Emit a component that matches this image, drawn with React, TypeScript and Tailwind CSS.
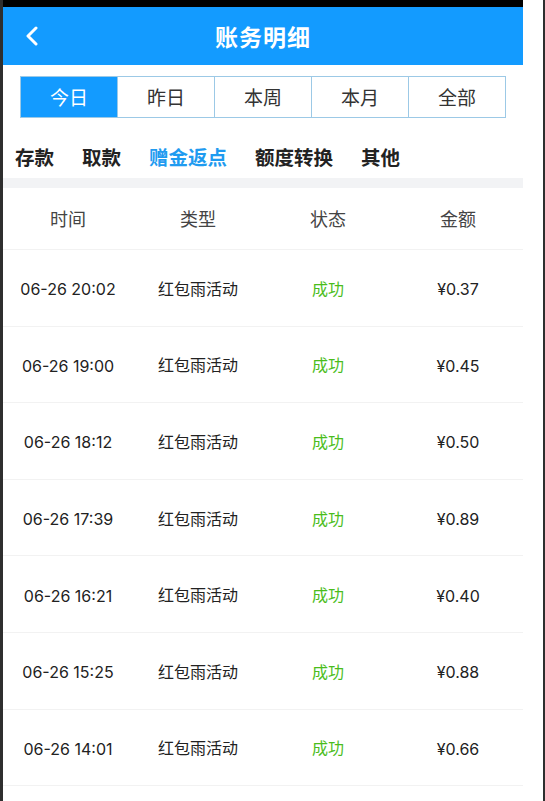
import React from 'react';

const rows = [
  { time: '06-26 20:02', amount: '¥0.37' },
  { time: '06-26 19:00', amount: '¥0.45' },
  { time: '06-26 18:12', amount: '¥0.50' },
  { time: '06-26 17:39', amount: '¥0.89' },
  { time: '06-26 16:21', amount: '¥0.40' },
  { time: '06-26 15:25', amount: '¥0.88' },
  { time: '06-26 14:01', amount: '¥0.66' },
];

const periods = ['今日', '昨日', '本周', '本月', '全部'];
const kinds = ['存款', '取款', '赠金返点', '额度转换', '其他'];

const font = { fontFamily: '"Noto Sans CJK SC", "Noto Sans", sans-serif' };
const rowFont = { fontFamily: 'Inter, "Noto Sans CJK SC", sans-serif' };

const App: React.FC = () => {
  return (
    <div className="flex h-[801px] w-[545px] overflow-hidden bg-white" style={font}>
      <div className="w-[3px] shrink-0 bg-[#2e2e2e]" />
      <div className="flex w-[520px] shrink-0 flex-col">
        <div className="h-[7px] bg-black" />
        <header className="relative flex h-[58px] items-center justify-center bg-[#139bff]">
          <svg className="absolute left-[22px] top-[19px] h-[20px] w-[14px]" viewBox="0 0 14 20" fill="none">
            <path d="M11 2 L3 10 L11 18" stroke="white" strokeWidth="3" strokeLinecap="round" strokeLinejoin="round" />
          </svg>
          <h1 className="text-[23px] font-bold tracking-[1px] text-white">账务明细</h1>
        </header>

        <div className="mx-[17px] mt-[11px] flex h-[42px] border border-[#9cc9e6]">
          {periods.map((p, i) => (
            <div
              key={p}
              className={
                i === 0
                  ? 'flex flex-1 items-center justify-center bg-[#139bff] text-[19px] text-white'
                  : 'flex flex-1 items-center justify-center border-l border-[#9cc9e6] text-[19px] text-[#333]'
              }
            >
              {p}
            </div>
          ))}
        </div>

        <nav className="flex h-[60px] items-center gap-[28px] pl-[12px] pt-[18px]">
          {kinds.map((k, i) => (
            <span
              key={k}
              className={i === 2 ? 'text-[19.5px] font-bold text-[#1f9bf0]' : 'text-[19.5px] font-bold text-[#222]'}
            >
              {k}
            </span>
          ))}
        </nav>

        <div className="h-[10px] bg-[#f2f3f5]" />

        <div className="grid h-[62px] grid-cols-4 items-center border-b border-[#f2f2f2] text-center text-[18px] text-[#444]">
          <span>时间</span>
          <span>类型</span>
          <span>状态</span>
          <span>金额</span>
        </div>

        {rows.map((r) => (
          <div
            key={r.time}
            className="grid h-[76.6px] shrink-0 grid-cols-4 items-center border-b border-[#f2f2f2] text-center text-[16px] text-[#222]"
          >
            <span className="pt-[3px]" style={rowFont}>{r.time}</span>
            <span>红包雨活动</span>
            <span className="text-[#4bbd1c]">成功</span>
            <span className="pt-[3px]" style={rowFont}>{r.amount}</span>
          </div>
        ))}
      </div>
      <div className="w-[20px] shrink-0 bg-white" />
      <div className="w-[2px] shrink-0 bg-[#2e2e2e]" />
    </div>
  );
};

export default App;
